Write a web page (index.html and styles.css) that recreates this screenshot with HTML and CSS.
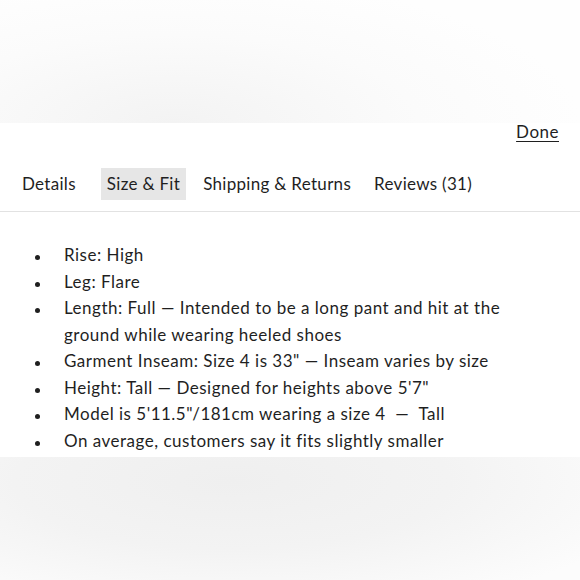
FILE: index.html
```html
<!DOCTYPE html>
<html>
<head>
<meta charset="utf-8">
<link rel="stylesheet" href="styles.css">
</head>
<body>
<div class="page">
  <div class="backdrop top"></div>
  <div class="sheet">
    <div class="sheet-head"><a class="done" href="#">Done</a></div>
    <nav class="tabs">
      <span class="tab">Details</span>
      <span class="tab active">Size &amp; Fit</span>
      <span class="tab">Shipping &amp; Returns</span>
      <span class="tab">Reviews (31)</span>
    </nav>
    <ul class="specs">
      <li>Rise: High</li>
      <li>Leg: Flare</li>
      <li>Length: Full — Intended to be a long pant and hit at the ground while wearing heeled shoes</li>
      <li>Garment Inseam: Size 4 is 33" — Inseam varies by size</li>
      <li>Height: Tall — Designed for heights above 5'7"</li>
      <li>Model is 5'11.5"/181cm wearing a size 4 &nbsp;— &nbsp;Tall</li>
      <li>On average, customers say it fits slightly smaller</li>
    </ul>
  </div>
  <div class="backdrop bottom"></div>
</div>
</body>
</html>
```
FILE: styles.css
```css
html, body {
  margin: 0;
  padding: 0;
  background: #fff;
}
body {
  font-family: "Lato", "Liberation Sans", sans-serif;
  color: #1f1f1f;
  letter-spacing: 0.5px;
}
.page {
  width: 580px;
  height: 580px;
  display: flex;
  flex-direction: column;
  overflow: hidden;
}
.backdrop.top {
  height: 123px;
  flex: none;
  background: radial-gradient(ellipse 70% 120% at 30% 100%, #f3f3f3 0%, #fbfbfb 60%, #fefefe 100%);
}
.backdrop.bottom {
  flex: 1;
  background: radial-gradient(ellipse 75% 110% at 40% 20%, #efefef 0%, #f3f3f3 50%, #fcfcfc 100%);
}
.sheet {
  background: #fff;
  height: 334px;
  flex: none;
}
.sheet-head {
  display: flex;
  justify-content: flex-end;
  padding: 0 21px 0 0;
  height: 45px;
}
.done {
  color: #1f1f1f;
  font-size: 17px;
  text-decoration: underline;
  text-underline-offset: 3px;
  text-decoration-thickness: 1px;
  line-height: 18px;
}
.tabs {
  display: flex;
  align-items: center;
  padding: 0 0 11px 16px;
  border-bottom: 1px solid #e2e2e2;
}
.tab {
  font-size: 17px;
  line-height: 32px;
  letter-spacing: 0.3px;
  padding: 0 6px;
  margin-right: 11px;
  white-space: nowrap;
}
.tab:first-child {
  margin-right: 19px;
}
.tab.active {
  background: #e6e6e6;
}
.specs {
  margin: 30px 0 0 0;
  padding: 0 60px 0 35px;
  list-style: none;
  font-size: 17px;
  line-height: 26.5px;
}
.specs li {
  display: flex;
}
.specs li::before {
  content: "";
  flex: none;
  width: 5px;
  height: 5px;
  border-radius: 50%;
  background: #1f1f1f;
  margin: 13px 24px 0 0;
}
```
